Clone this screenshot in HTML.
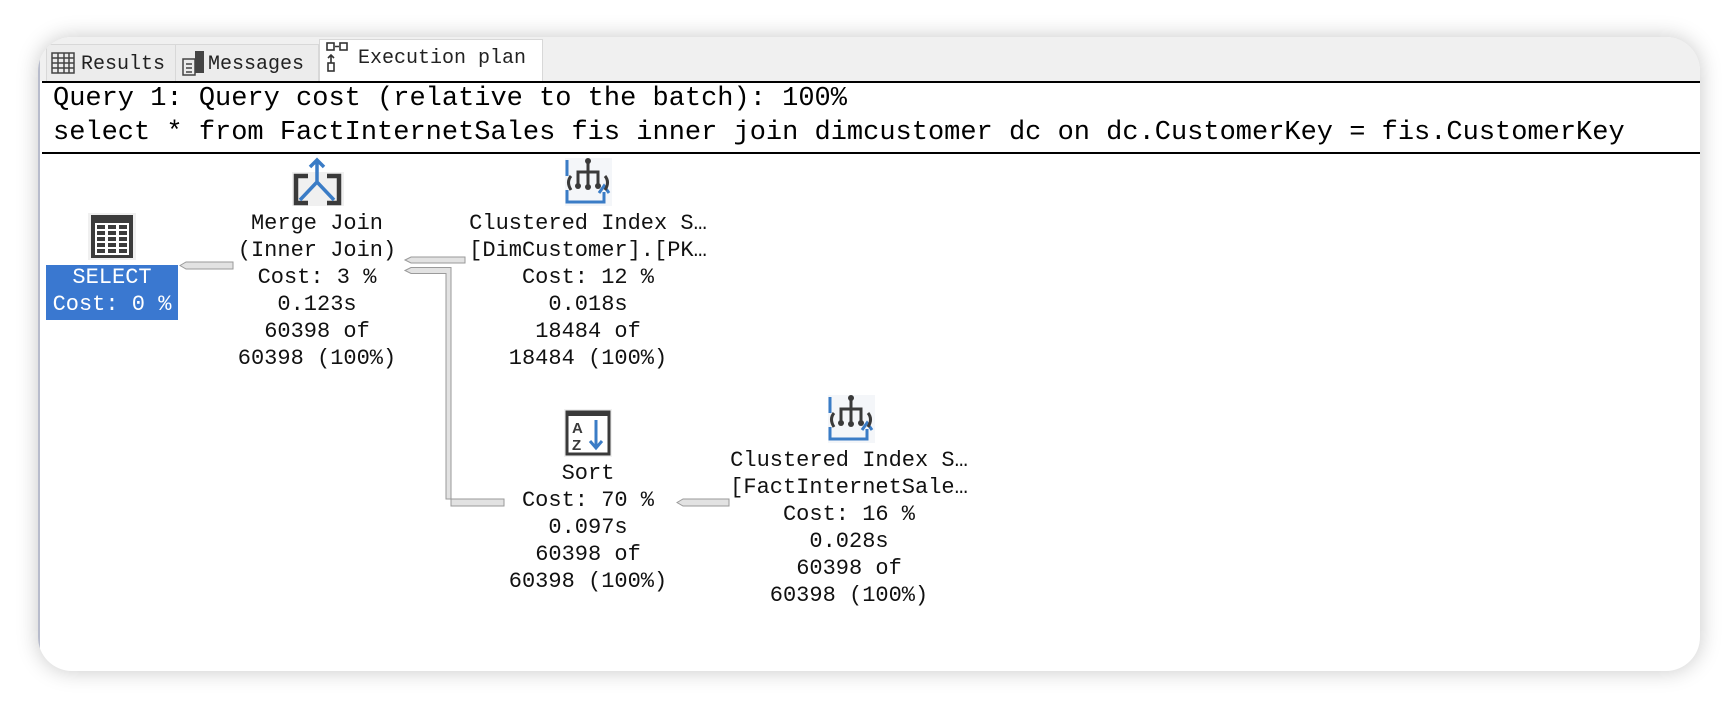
<!DOCTYPE html>
<html><head><meta charset="utf-8"><style>
body{margin:0;width:1736px;height:708px;background:#fff;position:relative;overflow:hidden;font-family:"Liberation Mono",monospace;}
#card{position:absolute;left:38px;top:37px;width:1662px;height:634px;border-radius:34px;background:#fff;box-shadow:0 0 22px rgba(0,0,0,0.22);overflow:hidden;}
#strip{position:absolute;left:0;top:0;width:100%;height:44px;background:#f0f0f0;}
.tab{position:absolute;top:7px;height:37px;border:1px solid #d8d8d8;border-bottom:none;background:#ececec;font-size:20px;line-height:40px;color:#222;box-sizing:border-box;}
.t{position:absolute;color:#000;white-space:pre;}
.q{font-size:27px;left:15px;}
.n{position:absolute;width:320px;text-align:center;font-size:22px;line-height:27px;white-space:pre;color:#111;}
</style></head><body>
<div id="card">
<div id="strip"></div>
<div class="tab" style="left:8px;width:130px;padding-left:34px">Results</div>
<div class="tab" style="left:137px;width:144px;padding-left:32px">Messages</div>
<div class="tab" style="left:281px;top:2px;height:42px;width:224px;background:#fff;padding-left:38px;line-height:38px">Execution plan</div>
<svg style="position:absolute;left:0;top:0" width="520" height="44">
<g fill="none" stroke="#444" stroke-width="1.5">
<rect x="14" y="16" width="22" height="20"/><path d="M14 21H36M14 26H36M14 31H36M20 16V36M26 16V36M31 16V36"/>
<rect x="145" y="22" width="12" height="16"/><path d="M148 27h6M148 31h6M148 35h6"/>
</g>
<rect x="157" y="14" width="9" height="22" fill="#444"/>
<g fill="none" stroke="#333" stroke-width="1.6">
<rect x="289" y="6" width="7" height="7"/><rect x="302" y="6" width="7" height="7"/><rect x="290" y="26" width="6" height="8"/>
<path d="M293 26V18M290 21l3-3 3 3M301 9.5h-4"/>
</g>
</svg>
<div style="position:absolute;left:4px;top:44px;width:100%;height:2px;background:#000"></div>
<div style="position:absolute;left:4px;top:115px;width:100%;height:1.5px;background:#000"></div>
<div class="t q" style="top:45px;line-height:34px">Query 1: Query cost (relative to the batch): 100%</div>
<div class="t q" style="top:79px;line-height:34px">select * from FactInternetSales fis inner join dimcustomer dc on dc.CustomerKey = fis.CustomerKey</div>
<div style="position:absolute;left:0;top:0;width:2px;height:100%;background:#b8bccc"></div>
</div>

<svg style="position:absolute;left:0;top:0" width="1000" height="708">
<g fill="#e2e2e2" stroke="#9a9a9a" stroke-width="1">
<polygon points="180,265.5 186,262 233,262 233,269 186,269"/>
<polygon points="405,260 411,257 465,257 465,263 411,263"/>
<polygon points="405,270.5 411,267.5 451,267.5 451,506 504,506 504,499 446,499 446,273.5 411,273.5"/>
<polygon points="677,502.5 683,499 729,499 729,506 683,506"/>
</g>
<rect x="88" y="213" width="48" height="47" fill="#f0f0f0"/>
<rect x="91" y="215" width="42" height="43" fill="#3c3c3c"/>
<g fill="#fff"><rect x="95" y="223" width="34" height="32"/></g>
<g fill="#3c3c3c">
<rect x="97" y="225" width="8" height="4"/><rect x="108" y="225" width="8" height="4"/><rect x="119" y="225" width="8" height="4"/>
<rect x="97" y="231" width="8" height="4"/><rect x="108" y="231" width="8" height="4"/><rect x="119" y="231" width="8" height="4"/>
<rect x="97" y="237" width="8" height="4"/><rect x="108" y="237" width="8" height="4"/><rect x="119" y="237" width="8" height="4"/>
<rect x="97" y="243" width="8" height="4"/><rect x="108" y="243" width="8" height="4"/><rect x="119" y="243" width="8" height="4"/>
<rect x="97" y="249" width="8" height="4"/><rect x="108" y="249" width="8" height="4"/><rect x="119" y="249" width="8" height="4"/>
</g>
<rect x="292" y="172" width="52" height="34" fill="#f0f0f0"/>
<g fill="none" stroke="#3a3a3a" stroke-width="4.5"><path d="M308 176H296V203H308M327 176H339V203H327"/></g>
<g fill="none" stroke="#3a7cc6" stroke-width="3.5"><path d="M317 160V182L300 200M317 182L334 200M310 167L317 160L324 167"/></g>
<g id="ci1">
<rect x="565" y="158" width="47" height="48" fill="#f4f6f9"/>
<path d="M567 160V176" stroke="#3a7cc6" stroke-width="3"/>
<path d="M567 190V202H604V192" fill="none" stroke="#3a7cc6" stroke-width="3"/>
<path d="M599 193L604 186L609 193" fill="none" stroke="#3a7cc6" stroke-width="3"/>
<g fill="none" stroke="#3a3a3a" stroke-width="3"><path d="M588 160V187M578 186V172H598V186"/><path d="M571 176Q566 182 571 190M605 176Q610 182 605 190"/></g>
<g fill="#3a3a3a"><circle cx="588" cy="161" r="3"/><circle cx="578" cy="186" r="3"/><circle cx="588" cy="187" r="3"/><circle cx="598" cy="186" r="3"/></g>
</g>
<use href="#ci1" x="263" y="237"/>
<rect x="564" y="409" width="48" height="48" fill="#f0f0f0"/>
<rect x="567" y="412" width="42" height="42" fill="#fff" stroke="#3a3a3a" stroke-width="3"/>
<rect x="567" y="411" width="42" height="5" fill="#3a3a3a"/>
<text x="572" y="433" font-family="Liberation Sans" font-weight="bold" font-size="15" fill="#3a3a3a">A</text>
<text x="572" y="450" font-family="Liberation Sans" font-weight="bold" font-size="15" fill="#3a3a3a">Z</text>
<path d="M596 420V447M590 441L596 448L602 441" fill="none" stroke="#3a7cc6" stroke-width="3"/>
</svg>

<div style="position:absolute;left:46px;top:265px;width:132px;height:55px;background:#3a78d0"></div>
<div class="n" style="left:-48px;top:264px;color:#fff">SELECT
Cost: 0 %</div>
<div class="n" style="left:157px;top:210px">Merge Join
(Inner Join)
Cost: 3 %
0.123s
60398 of
60398 (100%)</div>
<div class="n" style="left:428px;top:210px">Clustered Index S…
[DimCustomer].[PK…
Cost: 12 %
0.018s
18484 of
18484 (100%)</div>
<div class="n" style="left:428px;top:460px">Sort
Cost: 70 %
0.097s
60398 of
60398 (100%)</div>
<div class="n" style="left:689px;top:447px">Clustered Index S…
[FactInternetSale…
Cost: 16 %
0.028s
60398 of
60398 (100%)</div>
</body></html>
